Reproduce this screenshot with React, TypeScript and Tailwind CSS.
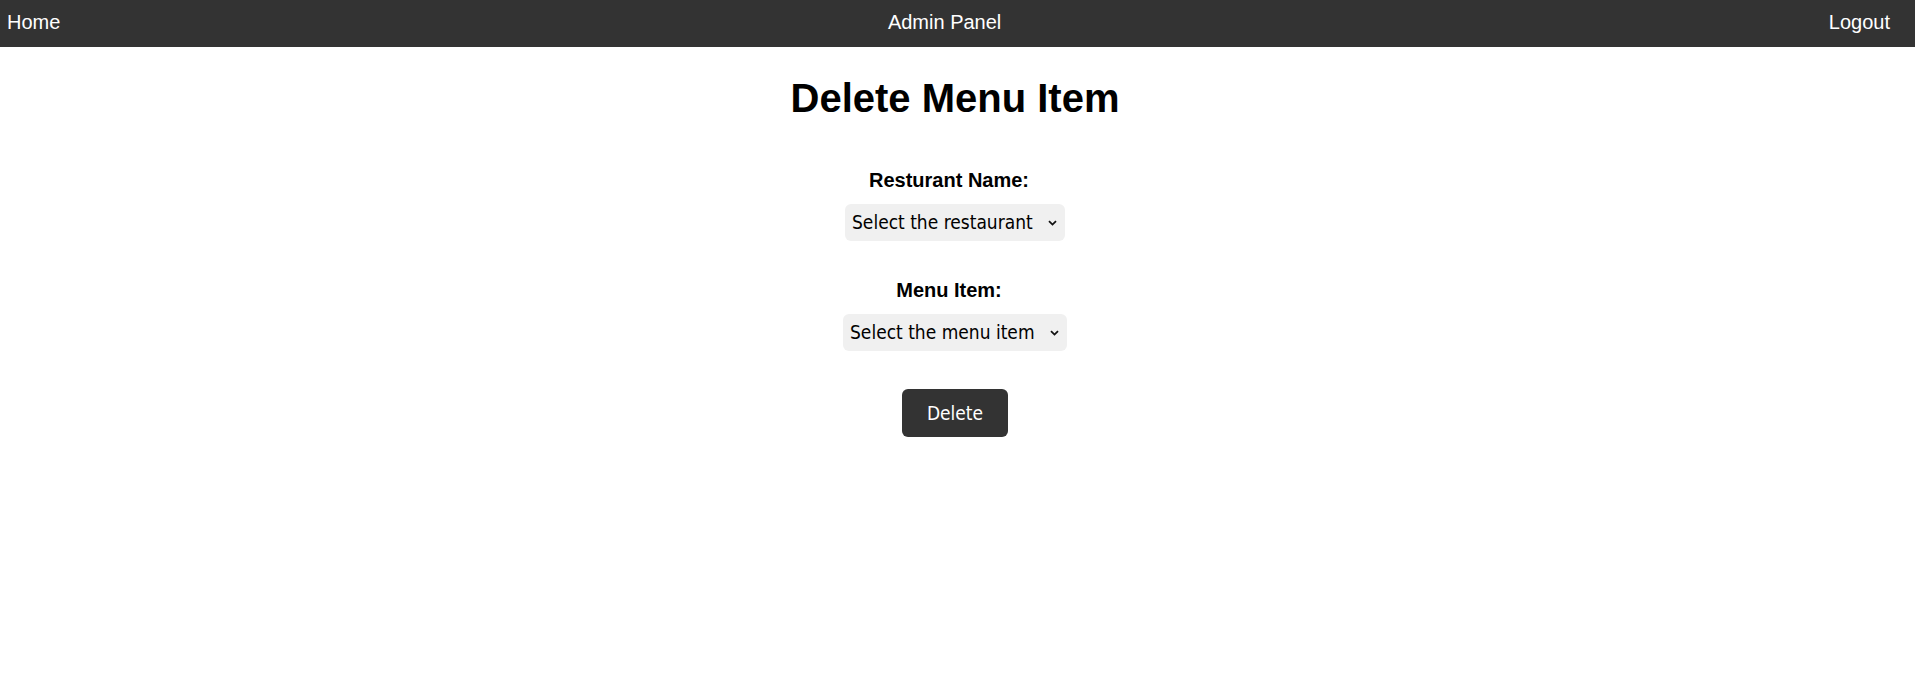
import { useState } from "react";

const restaurants = ["Select the restaurant"];
const menuItems = ["Select the menu item"];

function Chevron() {
  return (
    <svg
      className="pointer-events-none absolute right-[8px] top-1/2 -translate-y-1/2"
      width="9"
      height="6"
      viewBox="0 0 9 6"
      fill="none"
    >
      <path d="M1 1.2 L4.5 4.6 L8 1.2" stroke="#111" strokeWidth="1.8" />
    </svg>
  );
}

function Field({
  label,
  options,
  width,
  value,
  onChange,
}: {
  label: string;
  options: string[];
  width: string;
  value: string;
  onChange: (v: string) => void;
}) {
  return (
    <div className="flex flex-col items-center">
      <label className="block pr-[12px] text-[20px] font-bold leading-[23px] text-black">{label}</label>
      <div className={`relative mt-[12px] ${width}`}>
        <select
          value={value}
          onChange={(e) => onChange(e.target.value)}
          className="h-[37px] w-full appearance-none rounded-[6px] bg-[#f0f0f0] pl-[7px] pr-[24px] text-[19px] text-black outline-none [font-family:'DejaVu_Sans','Noto_Sans',sans-serif] font-stretch-condensed"
        >
          {options.map((o) => (
            <option key={o}>{o}</option>
          ))}
        </select>
        <Chevron />
      </div>
    </div>
  );
}

export default function App() {
  const [restaurant, setRestaurant] = useState(restaurants[0]);
  const [item, setItem] = useState(menuItems[0]);

  return (
    <div className="min-h-[691px] bg-white [font-family:'Liberation_Sans',Arial,sans-serif]">
      <nav className="flex items-center justify-between bg-[#333333] pl-[7px] pr-[25px] pt-[11px] pb-[13px] text-[20px] leading-[23px] text-white">
        <a href="#">Home</a>
        <span>Admin Panel</span>
        <a href="#">Logout</a>
      </nav>

      <main className="pr-[5px]">
        <h1 className="mt-[28px] text-center text-[40px] font-bold leading-[46px] text-black">Delete Menu Item</h1>

        <form className="mt-[48px] flex flex-col items-center" onSubmit={(e) => e.preventDefault()}>
          <Field
            label="Resturant Name:"
            options={restaurants}
            width="w-[220px]"
            value={restaurant}
            onChange={setRestaurant}
          />
          <div className="mt-[38px]">
            <Field label="Menu Item:" options={menuItems} width="w-[224px]" value={item} onChange={setItem} />
          </div>
          <button
            type="submit"
            className="mt-[38px] h-[48px] w-[106px] rounded-[6px] bg-[#333333] text-[19px] text-white [font-family:'DejaVu_Sans','Noto_Sans',sans-serif] font-stretch-condensed"
          >
            Delete
          </button>
        </form>
      </main>
    </div>
  );
}
